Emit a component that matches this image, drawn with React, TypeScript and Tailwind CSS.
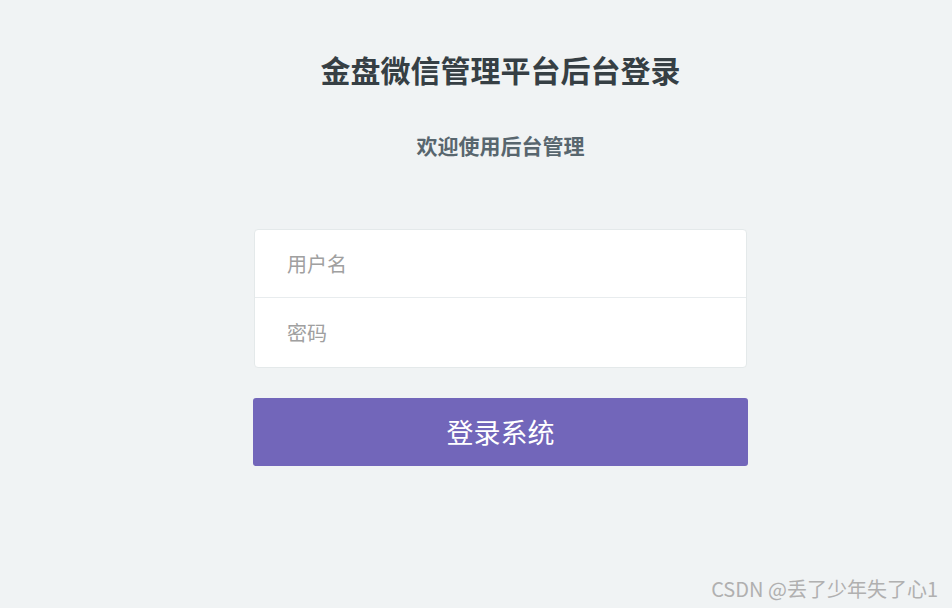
export default function App() {
  const font = { fontFamily: '"Microsoft YaHei", "Noto Sans CJK SC", "Noto Sans", sans-serif' };
  return (
    <div className="relative w-[952px] h-[608px] bg-[#f0f3f4] overflow-hidden" style={font}>
      <div className="ml-[253px] w-[495px] flex flex-col">
        <h1 className="mt-[48px] h-[42px] leading-[42px] text-center text-[30px] font-bold text-[#363f44]">
          金盘微信管理平台后台登录
        </h1>
        <p className="mt-[40px] h-[30px] leading-[30px] text-center text-[21px] font-bold text-[#58666e]">
          欢迎使用后台管理
        </p>
        <div className="mt-[69px] mx-[1px] bg-white border border-[#e4e9ea] rounded-[4px] flex flex-col">
          <div className="h-[68px] flex items-center pl-[32px] border-b border-[#e8ecee]">
            <span className="text-[20px] text-[#a0a0a0]">用户名</span>
          </div>
          <div className="h-[69px] flex items-center pl-[32px]">
            <span className="text-[20px] text-[#a0a0a0]">密码</span>
          </div>
        </div>
        <button className="mt-[30px] h-[68px] w-full bg-[#7266ba] rounded-[3px] text-white text-[27px] flex items-center justify-center">
          登录系统
        </button>
      </div>
      <div className="absolute right-[14px] bottom-[7px] text-[20px] text-[#b0b0b0] leading-[24px]">
        CSDN @丢了少年失了心1
      </div>
    </div>
  );
}
